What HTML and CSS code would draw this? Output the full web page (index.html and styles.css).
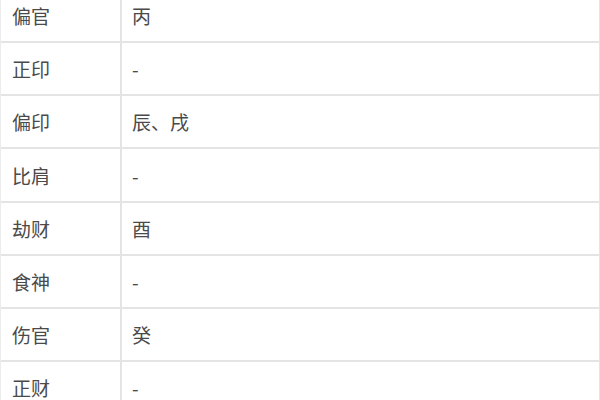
FILE: index.html
```html
<!DOCTYPE html>
<html lang="zh">
<head>
<meta charset="utf-8">
<link rel="stylesheet" href="styles.css">
</head>
<body>
<div class="table">
  <div class="row"><div class="cell key">偏官</div><div class="cell val">丙</div></div>
  <div class="row"><div class="cell key">正印</div><div class="cell val">-</div></div>
  <div class="row"><div class="cell key">偏印</div><div class="cell val">辰、戌</div></div>
  <div class="row"><div class="cell key">比肩</div><div class="cell val">-</div></div>
  <div class="row"><div class="cell key">劫财</div><div class="cell val">酉</div></div>
  <div class="row"><div class="cell key">食神</div><div class="cell val">-</div></div>
  <div class="row"><div class="cell key">伤官</div><div class="cell val">癸</div></div>
  <div class="row"><div class="cell key">正财</div><div class="cell val">-</div></div>
</div>
</body>
</html>
```

FILE: styles.css
```css
html, body {
  margin: 0;
  padding: 0;
  background: #ffffff;
  overflow: hidden;
}
body {
  font-family: "Noto Sans CJK SC", "Noto Sans", sans-serif;
  font-size: 19px;
  color: #4a4a4a;
}
.table {
  width: 598px;
  margin-top: -12px;
  border-left: 1px solid #ececec;
  border-right: 2px solid #e4e4e4;
  border-top: 2px solid #e4e4e4;
}
.row {
  display: grid;
  grid-template-columns: 121px 1fr;
  height: 53.17px;
  box-sizing: border-box;
  border-bottom: 2px solid #e4e4e4;
}
.cell {
  display: flex;
  align-items: center;
  padding-left: 11px;
}
.key {
  border-right: 2px solid #e4e4e4;
}
.val {
  padding-left: 10px;
}
```
